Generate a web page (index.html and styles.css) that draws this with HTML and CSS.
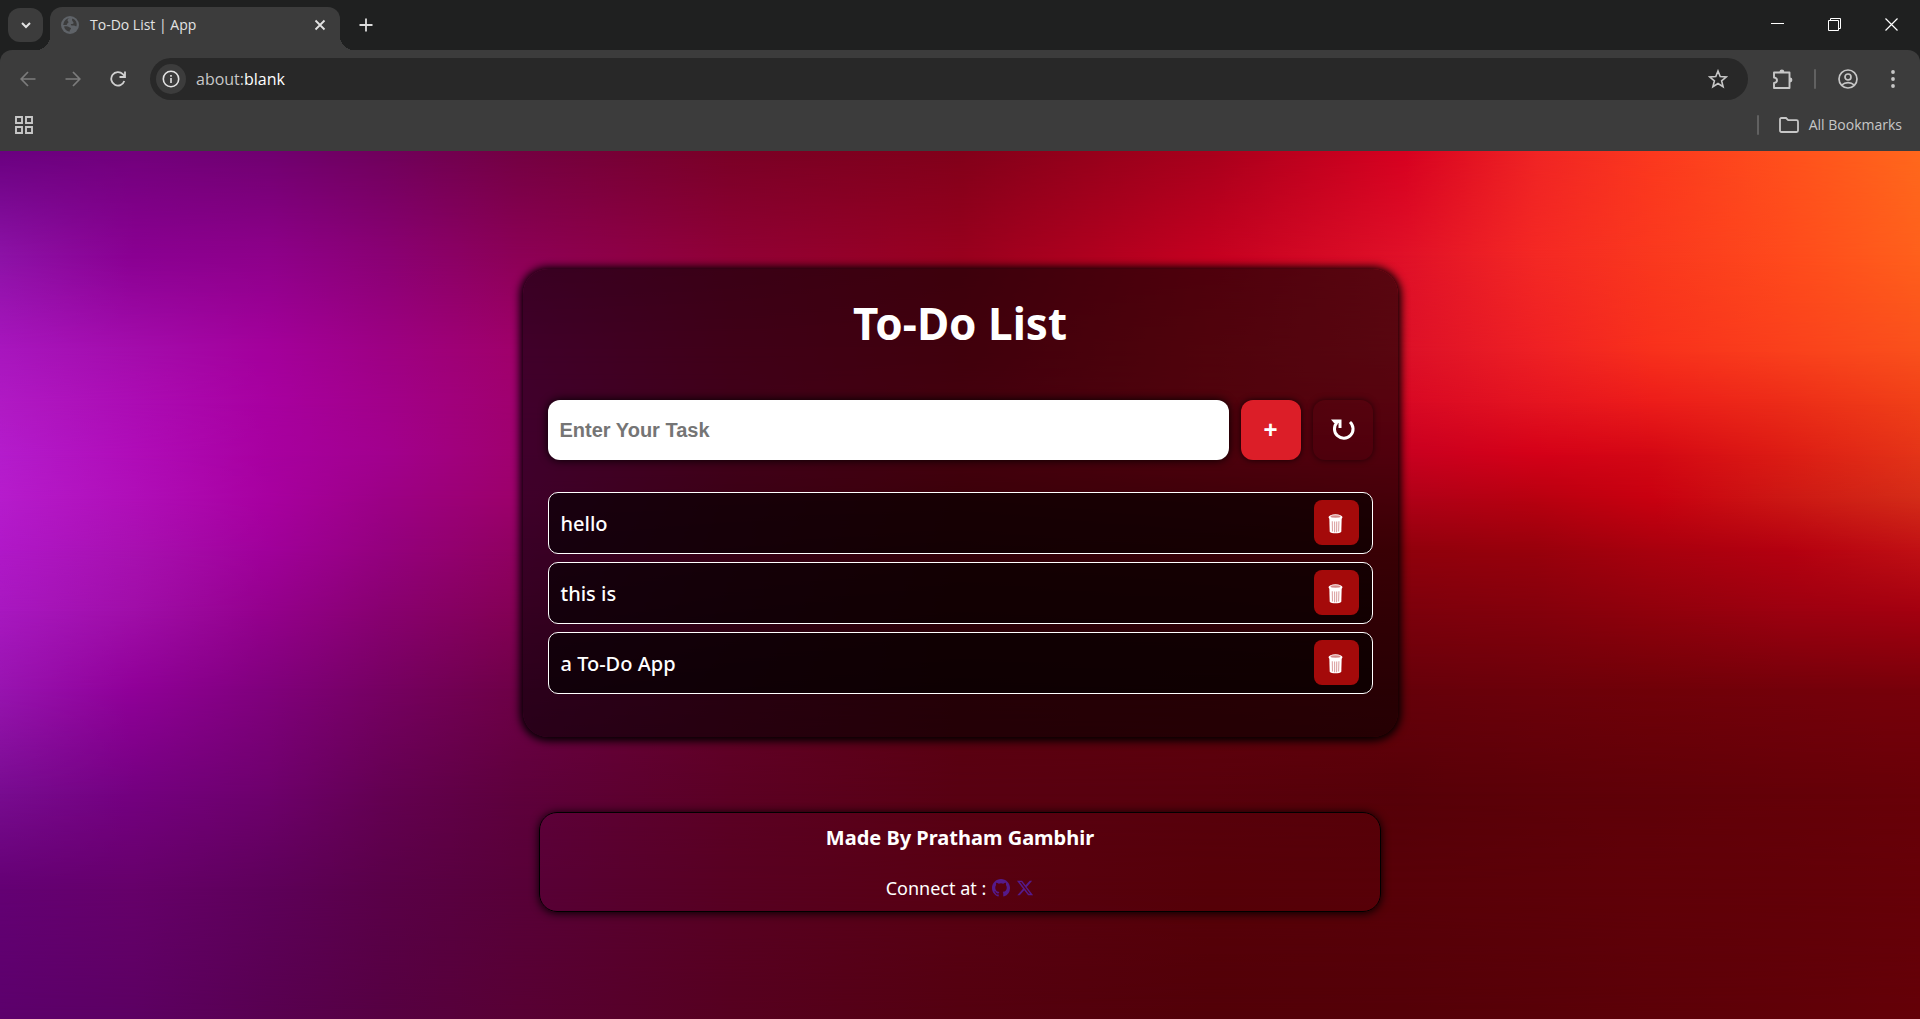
FILE: index.html
```html
<!DOCTYPE html>
<html lang="en">
<head>
<meta charset="utf-8">
<meta name="viewport" content="width=device-width, initial-scale=1">
<title>To-Do List | App</title>
<link rel="stylesheet" href="styles.css">
</head>
<body>
<header class="browser">
  <div class="tab-strip">
    <button class="tab-search" aria-label="Search tabs"><svg width="12" height="12" viewBox="0 0 12 12"><path d="M2 4l4 4 4-4" fill="none" stroke="#e3e3e3" stroke-width="2"/></svg></button>
    <div class="tab">
      <svg width="18" height="18" viewBox="0 0 18 18"><circle cx="9" cy="9" r="9" fill="#5f6368"/><path d="M9.500 2c-2 .3-3 1.200-3 2.200s1 1 1 2-1.500.8-1.500 2c0 .8-1.500 1-3.800.8A7 7 0 0 1 9.500 2zM11 3.500c0 1.500 1 2 1.500 3s-1 1.500-2 1.500-1 1.500.5 1.500h2c1.500 0 1.500 1 2.500.8A7 7 0 0 0 11.500 2.500zM3 10.500c2-.5 4-.5 5 .5s2 .5 2 1.500-1.500 1-1.500 3.200A7 7 0 0 1 3 10.500z" fill="#3c3c3c"/></svg>
      <span class="tab-title">To-Do List | App</span>
      <button class="icon-button" aria-label="Close tab"><svg width="12" height="12" viewBox="0 0 12 12"><path d="M1.500 1.500l9 9M10.500 1.500l-9 9" stroke="#e3e3e3" stroke-width="1.800"/></svg></button>
    </div>
    <button class="icon-button new-tab" aria-label="New tab"><svg width="14" height="14" viewBox="0 0 14 14"><path d="M7 .5v13M.5 7h13" stroke="#dcdcdc" stroke-width="1.800"/></svg></button>
    <div class="window-controls">
      <button class="icon-button" aria-label="Minimize"><svg width="14" height="14" viewBox="0 0 14 14"><path d="M0 5.500h13" stroke="#fff"/></svg></button>
      <button class="icon-button" aria-label="Restore"><svg width="14" height="14" viewBox="0 0 14 14"><path d="M.5 2.500h10v10H.5zM2.500 2.500V.5h10v10H11" fill="none" stroke="#fff"/></svg></button>
      <button class="icon-button" aria-label="Close"><svg width="14" height="14" viewBox="0 0 14 14"><path d="M.5 .5l12 12M12.500 .5l-12 12" stroke="#fff" stroke-width="1.200"/></svg></button>
    </div>
  </div>
  <div class="toolbar">
    <nav class="nav-buttons" aria-label="History">
      <button class="icon-button" aria-label="Back"><svg width="16" height="16" viewBox="0 0 16 16"><path d="M15.500 8H1.500M8 1L1.200 8 8 15" fill="none" stroke="#7c7c7c" stroke-width="1.700"/></svg></button>
      <button class="icon-button" aria-label="Forward"><svg width="16" height="16" viewBox="0 0 16 16"><path d="M.5 8h14M8 1l6.800 7L8 15" fill="none" stroke="#7c7c7c" stroke-width="1.700"/></svg></button>
      <button class="icon-button" aria-label="Reload"><svg width="16" height="16" viewBox="0 0 16 16"><path d="M14.300 10A6.700 6.700 0 1 1 12.800 3.200L14.500 5M15 .5v5.500H9.500" fill="none" stroke="#d0d0d0" stroke-width="1.800"/></svg></button>
    </nav>
    <div class="omnibox">
      <button class="site-info" aria-label="Site information"><svg width="18" height="18" viewBox="0 0 18 18"><circle cx="9" cy="9" r="7.700" fill="none" stroke="#e3e3e3" stroke-width="1.600"/><path d="M9 8v5M9 5v1.700" stroke="#e3e3e3" stroke-width="1.600"/></svg></button>
      <span class="url">about:<b>blank</b></span>
      <button class="icon-button" aria-label="Bookmark this tab"><svg width="20" height="20" viewBox="0 0 20 20"><path d="M10 2l2.200 5.600 6 .4-4.600 3.800 1.500 5.900L10 14.500l-5.100 3.200 1.500-5.900L1.800 8l6-.4z" fill="none" stroke="#c7c7c7" stroke-width="1.600"/></svg></button>
    </div>
    <div class="actions">
      <button class="icon-button" aria-label="Extensions"><svg width="22" height="22" viewBox="0 0 22 22"><path d="M17.500 4.500V20H2v-5c4-.5 4-5 0-5.500v-5z" fill="none" stroke="#c7c7c7" stroke-width="1.900" stroke-linejoin="round"/><path d="M7.500 4a2.400 2.400 0 0 1 4.800 0zM18 9.600a2.400 2.400 0 0 1 0 4.800z" fill="#c7c7c7"/></svg></button>
      <span class="divider"></span>
      <button class="icon-button profile" aria-label="Profile"><svg width="20" height="20" viewBox="0 0 20 20"><g fill="none" stroke="#c7c7c7" stroke-width="1.700"><circle cx="10" cy="10" r="9"/><circle cx="10" cy="8" r="3"/><path d="M3.800 16c3.500-3.300 9-3.300 12.400 0"/></g></svg></button>
      <button class="icon-button menu" aria-label="Menu"><svg width="4" height="18" viewBox="0 0 4 18"><g fill="#c7c7c7"><circle cx="2" cy="2" r="1.900"/><circle cx="2" cy="9" r="1.900"/><circle cx="2" cy="16" r="1.900"/></g></svg></button>
    </div>
  </div>
  <div class="bookmarks">
    <button class="icon-button" aria-label="Apps"><svg width="18" height="18" viewBox="0 0 18 18"><path d="M1 1h6v6H1zM11 1h6v6h-6zM1 11h6v6H1zM11 11h6v6h-6z" fill="none" stroke="#c7c7c7" stroke-width="1.900"/></svg></button>
    <span class="divider"></span>
    <button class="all-bookmarks"><svg width="20" height="16" viewBox="0 0 20 16"><path d="M1 2.500C1 1.500 1.500 1 2.500 1H7l2.200 2.200h8.300c1 0 1.500.5 1.500 1.500v8.800c0 1-.5 1.500-1.500 1.500h-15c-1 0-1.500-.5-1.500-1.500z" fill="none" stroke="#c7c7c7" stroke-width="1.800"/></svg>All Bookmarks</button>
  </div>
</header>

<div class="page">
  <div class="backdrop" aria-hidden="true">
    <div class="band band-1"></div>
    <div class="band band-2"></div>
    <div class="band band-3"></div>
    <div class="band band-4"></div>
    <div class="band band-5"></div>
    <div class="band band-6"></div>
    <div class="band band-7"></div>
    <div class="band band-8"></div>
    <div class="band band-9"></div>
    <div class="band band-10"></div>
    <div class="band band-11"></div>
    <div class="band band-12"></div>
  </div>
  <svg class="symbols" width="0" height="0" aria-hidden="true">
    <symbol id="trash" viewBox="0 0 15 20"><path d="M1.300 4h12.400l-.4 13.800c-1.500 2-10.100 2-11.600 0z" fill="#fff"/><path d="M4.300 7.200l.2 10.300M6.600 7.600v10.600M8.700 7.600l-.1 10.600M10.900 7.200l-.3 10.200" stroke="#dca4a4" stroke-width="1.100"/><ellipse cx="7.500" cy="3.200" rx="7" ry="2.900" fill="#fff"/><ellipse cx="7.500" cy="2.500" rx="5" ry="1.200" fill="#d68a8a"/></symbol>
  </svg>

  <main class="card">
    <h1>To-Do List</h1>
    <form class="entry">
      <input class="task-input" type="text" aria-label="Task" placeholder="Enter Your Task">
      <button class="square add" type="button" aria-label="Add task">+</button>
      <button class="square reset" type="button" aria-label="Reset list"><svg width="24" height="22" viewBox="0 0 24 22"><path d="M6 3.500A9.300 9.300 0 1 0 19 3" fill="none" stroke="#fff" stroke-width="3"/><path d="M0 .5h10.500v8.500H7.500V4H3z" fill="#fff"/></svg></button>
    </form>
    <ul class="tasks">
      <li class="task"><span>hello</span><button class="delete" aria-label="Delete hello"><svg width="15" height="20"><use href="#trash"/></svg></button></li>
      <li class="task"><span>this is</span><button class="delete" aria-label="Delete this is"><svg width="15" height="20"><use href="#trash"/></svg></button></li>
      <li class="task"><span>a To-Do App</span><button class="delete" aria-label="Delete a To-Do App"><svg width="15" height="20"><use href="#trash"/></svg></button></li>
    </ul>
  </main>

  <footer class="credits">
    <h2>Made By Pratham Gambhir</h2>
    <p class="connect">Connect at :
      <a href="#github" aria-label="GitHub"><svg width="18" height="18" viewBox="0 0 16 16"><path fill="currentColor" d="M8 0C3.580 0 0 3.580 0 8c0 3.540 2.290 6.530 5.470 7.590.4.070.55-.17.55-.38 0-.19-.01-.82-.01-1.490-2.010.37-2.530-.49-2.690-.94-.09-.23-.48-.94-.82-1.130-.28-.15-.68-.52-.01-.53.63-.01 1.080.58 1.230.82.72 1.210 1.870.87 2.330.66.070-.52.28-.87.51-1.070-1.780-.2-3.640-.89-3.640-3.950 0-.87.31-1.590.82-2.150-.08-.2-.36-1.020.08-2.120 0 0 .67-.21 2.200.82a7.600 7.600 0 0 1 4 0c1.530-1.040 2.200-.82 2.200-.82.44 1.100.16 1.920.08 2.120.51.56.82 1.270.82 2.150 0 3.070-1.870 3.750-3.650 3.950.29.25.54.73.54 1.480 0 1.070-.01 1.930-.01 2.200 0 .21.15.46.55.38A8.010 8.010 0 0 0 16 8c0-4.420-3.580-8-8-8z"/></svg></a>
      <a href="#x" aria-label="X"><svg width="18" height="18" viewBox="0 0 512 512"><path fill="currentColor" d="M389.200 48h70.600L305.600 224.200 487 464H345L233.700 318.600 106.500 464H35.800L200.700 275.500 26.800 48H172.400L272.900 180.900 389.200 48zM364.400 421.800h39.100L151.100 88h-42L364.400 421.800z"/></svg></a>
    </p>
  </footer>
</div>
</body>
</html>
```
FILE: styles.css
```css
* { box-sizing: border-box; }

body {
  margin: 0;
  min-height: 100vh;
  display: flex;
  flex-direction: column;
  background: #3c3c3c;
  color: #fff;
  font-family: "Comic Sans MS", "Noto Sans", sans-serif;
}

button { border: 0; padding: 0; background: none; color: inherit; font: inherit; cursor: pointer; }
svg { display: block; }

/* Browser chrome */
.browser { font-family: "Segoe UI", "Open Sans", sans-serif; background: #1f2020; color: #e3e3e3; }
.icon-button { display: flex; align-items: center; justify-content: center; }

.tab-strip { height: 50px; display: flex; align-items: flex-end; padding-left: 8px; }
.tab-search {
  position: relative; z-index: 1;
  width: 35px; height: 34px; margin: 0 7px 8px 0; border-radius: 12px; background: #3c3c3c;
  display: flex; align-items: center; justify-content: center;
}
.tab {
  position: relative;
  width: 290px; height: 43px; padding: 0 14px 7px 11px;
  display: flex; align-items: center; gap: 11px;
  background: #3c3c3c; border-radius: 12px 12px 0 0;
}
.tab::before, .tab::after { content: ""; position: absolute; bottom: 0; width: 14px; height: 14px; }
.tab::before { left: -14px; background: radial-gradient(circle at 0 0, #1f2020 14px, #3c3c3c 14px); }
.tab::after { right: -14px; background: radial-gradient(circle at 100% 0, #1f2020 14px, #3c3c3c 14px); }
.tab-title { flex: 1; font-size: 14px; line-height: 20px; }
.new-tab { width: 24px; height: 50px; margin-left: 14px; }
.window-controls { margin-left: auto; display: flex; }
.window-controls .icon-button { width: 57px; height: 50px; }

.toolbar { height: 58px; display: flex; align-items: center; padding: 0 22px 0 20px; background: #3c3c3c; border-radius: 12px 12px 0 0; }
.nav-buttons { display: flex; gap: 29px; margin-right: 24px; }
.omnibox { flex: 1; height: 42px; display: flex; align-items: center; gap: 10px; padding: 0 20px 0 6px; border-radius: 21px; background: #282828; }
.site-info { width: 30px; height: 30px; border-radius: 50%; background: #3c3c3c; display: flex; align-items: center; justify-content: center; }
.url { flex: 1; font-size: 16px; line-height: 24px; color: #c7c7c7; }
.url b { font-weight: 400; color: #fff; }
.actions { display: flex; align-items: center; margin-left: 24px; }
.actions .divider { margin: 0 22px 0 20px; }
.actions .menu { margin-left: 30px; width: 10px; }
.divider { width: 2px; height: 20px; background: #616161; border-radius: 1px; }

.bookmarks { height: 43px; display: flex; align-items: center; gap: 20px; padding: 0 18px 10px 15px; background: #3c3c3c; }
.bookmarks .divider { margin-left: auto; }
.all-bookmarks { display: flex; align-items: center; gap: 10px; font-size: 14px; color: #c7c7c7; }

/* Application page */
.page {
  position: relative;
  isolation: isolate;
  flex: 1;
  display: flex;
  flex-direction: column;
  align-items: center;
  gap: 75px;
  padding: 118px 20px 100px;
}
.symbols { position: absolute; }

/* Colour mesh: each band is a row of colours, faded into the row above it */
.backdrop { position: absolute; inset: 0; z-index: -1; overflow: hidden; background: #66007c; }
.band {
  position: absolute; inset: 0;
  background: linear-gradient(90deg, var(--c1), var(--c2) 7%, var(--c3) 14%, var(--c4) 20%, var(--c5) 27%, var(--c6) 38%, var(--c7) 50%, var(--c8) 63%, var(--c9) 73%, var(--c10) 80%, var(--c11) 86%, var(--c12) 93%, var(--c13));
  mask-image: linear-gradient(180deg, transparent var(--from), #000 var(--to));
}
.band-1 { mask-image: none; --c1: #6a0080; --c2: #72007c; --c3: #700070; --c4: #70005c; --c5: #740042; --c6: #7a0026; --c7: #82001a; --c8: #a8001c; --c9: #d60020; --c10: #f02424; --c11: #fc381e; --c12: #ff501c; --c13: #ff681c; }
.band-2 { --from: 0%; --to: 12%; --c1: #8c12a6; --c2: #8a0092; --c3: #8e008a; --c4: #8a0074; --c5: #8c0056; --c6: #900036; --c7: #98001e; --c8: #c40020; --c9: #e01028; --c10: #f42824; --c11: #fa381e; --c12: #ff4a1c; --c13: #ff601c; }
.band-3 { --from: 12%; --to: 23%; --c1: #a816be; --c2: #a40cac; --c3: #a4009c; --c4: #9e0084; --c5: #a0006a; --c6: #a0003c; --c7: #a00020; --c8: #c80820; --c9: #dc1028; --c10: #ee2024; --c11: #f8301c; --c12: #fa401c; --c13: #fa501c; }
.band-4 { --from: 23%; --to: 29%; --c1: #b01ac4; --c2: #ac0cb4; --c3: #a800a0; --c4: #a2008a; --c5: #a0006e; --c6: #a00040; --c7: #a80022; --c8: #c80820; --c9: #d80824; --c10: #e41420; --c11: #ec1c1a; --c12: #ec2c18; --c13: #f04018; }
.band-5 { --from: 29%; --to: 35%; --c1: #b41ccc; --c2: #b00cb8; --c3: #a800a0; --c4: #a2008e; --c5: #a0006e; --c6: #a00040; --c7: #a80022; --c8: #c00020; --c9: #c80020; --c10: #d40018; --c11: #d40814; --c12: #dc1c14; --c13: #e43418; }
.band-6 { --from: 35%; --to: 40%; --c1: #b61ccc; --c2: #b00eb8; --c3: #a800a0; --c4: #9c0086; --c5: #9c006a; --c6: #980038; --c7: #960018; --c8: #a00018; --c9: #b00018; --c10: #b80010; --c11: #c80010; --c12: #cc1814; --c13: #d42c18; }
.band-7 { --from: 40%; --to: 46%; --c1: #b018c8; --c2: #a810b0; --c3: #a0009a; --c4: #94007e; --c5: #900060; --c6: #880034; --c7: #800014; --c8: #880012; --c9: #90000c; --c10: #98000c; --c11: #a8000e; --c12: #b40010; --c13: #c01014; }
.band-8 { --from: 46%; --to: 53%; --c1: #a818c0; --c2: #a00ea8; --c3: #94008c; --c4: #880070; --c5: #840054; --c6: #780030; --c7: #700010; --c8: #740010; --c9: #7c000c; --c10: #84000c; --c11: #90000c; --c12: #9c0010; --c13: #a40010; }
.band-9 { --from: 53%; --to: 62%; --c1: #9814b0; --c2: #900098; --c3: #80007c; --c4: #760062; --c5: #6e0046; --c6: #640028; --c7: #5c0010; --c8: #60000c; --c9: #66000a; --c10: #6c000a; --c11: #700008; --c12: #74000a; --c13: #78000a; }
.band-10 { --from: 62%; --to: 74%; --c1: #780c90; --c2: #740080; --c3: #6e006c; --c4: #640052; --c5: #5e003c; --c6: #5c0024; --c7: #580012; --c8: #58000c; --c9: #560008; --c10: #5c0008; --c11: #600008; --c12: #640008; --c13: #680008; }
.band-11 { --from: 74%; --to: 85%; --c1: #640074; --c2: #66006a; --c3: #5e005a; --c4: #5a0048; --c5: #580038; --c6: #580022; --c7: #580012; --c8: #560008; --c9: #580008; --c10: #5c0008; --c11: #600008; --c12: #620008; --c13: #660008; }
.band-12 { --from: 85%; --to: 100%; --c1: #5c006c; --c2: #5c0062; --c3: #580050; --c4: #560042; --c5: #580034; --c6: #560020; --c7: #540010; --c8: #520008; --c9: #540008; --c10: #580008; --c11: #5c0008; --c12: #600008; --c13: #640008; }

.card {
  width: 100%;
  max-width: 875px;
  padding: 25px 25px 43px;
  border-radius: 25px;
  background: rgba(0, 0, 0, 0.6);
  box-shadow: 0 1px 8px 3px #000;
}
.card h1 { margin: 0 0 48px; font-size: 44px; line-height: 58px; text-align: center; }

.entry { display: flex; gap: 12px; margin-bottom: 32px; }
.task-input {
  flex: 1; min-width: 0; height: 60px; padding: 0 12px; border: 0; border-radius: 12px;
  background: #fff; color: #000; font: bold 20px "Liberation Sans", Arial, sans-serif;
  box-shadow: 0 0 10px #000;
}
.task-input::placeholder { color: #757575; }
.square {
  width: 60px; height: 60px; border-radius: 12px; box-shadow: 0 0 6px rgba(0, 0, 0, 0.8);
  display: flex; align-items: center; justify-content: center;
  font: bold 24px "Liberation Sans", Arial, sans-serif;
}
.add { background: #dc1e28; }
.reset { box-shadow: 0 0 6px rgba(0, 0, 0, 0.6); }

.tasks { list-style: none; margin: 0; padding: 0; display: grid; gap: 8px; }
.task {
  height: 62px; padding: 0 13px 1px 12px;
  display: flex; align-items: center; justify-content: space-between;
  border: 1px solid #fff; border-radius: 10px; background: rgba(0, 0, 0, 0.6);
  font-size: 20px; line-height: 28px; font-weight: 500;
}
.task span { padding-top: 3px; }
.delete { width: 45px; height: 45px; border-radius: 8px; background: #a40a0a; display: flex; align-items: center; justify-content: center; padding: 3px 2px 0 0; }

.credits {
  width: 100%;
  max-width: 842px;
  padding: 11px 20px 11px;
  border: 1px solid #000;
  border-radius: 18px;
  box-shadow: 0 1px 10px #000;
  text-align: center;
}
.credits h2 { margin: 0 0 24px; font-size: 20px; line-height: 28px; }
.connect { margin: 0; display: flex; align-items: center; justify-content: center; gap: 6px; font-size: 18px; line-height: 24px; }
.connect a { color: #551a8b; }
```
